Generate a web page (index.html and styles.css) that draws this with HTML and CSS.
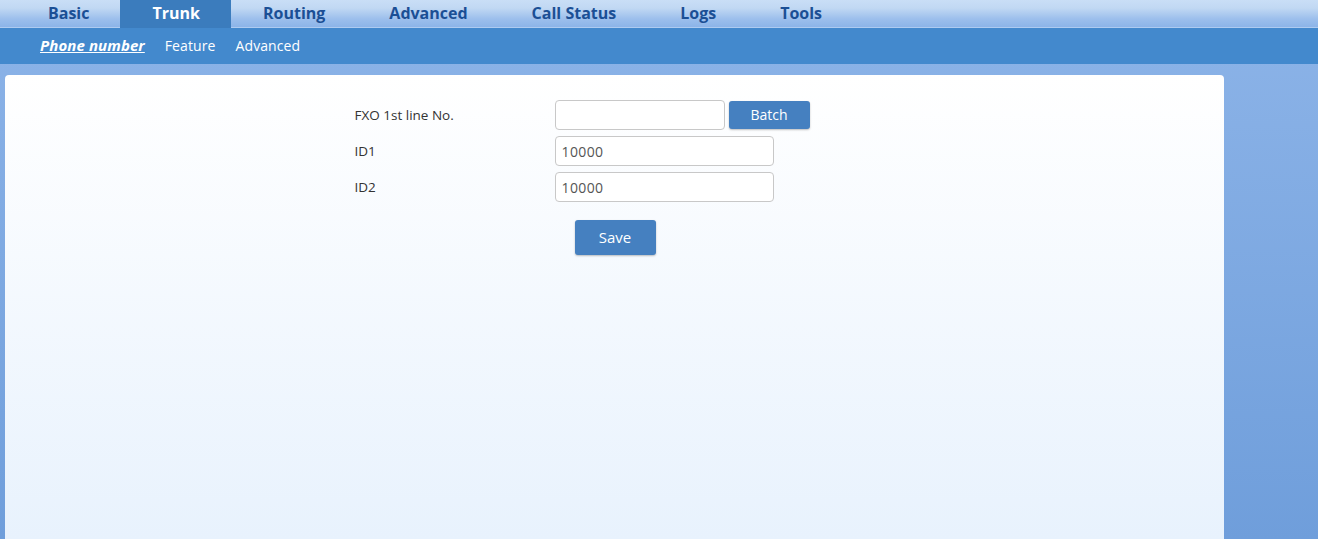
FILE: index.html
```html
<!DOCTYPE html>
<html>

    <head>
        <link rel="stylesheet" href="styles.css">
    </head>

    <body>
        <div class="topnav">
            <a class="tab">Basic</a>
            <a class="tab active">Trunk</a>
            <a class="tab">Routing</a>
            <a class="tab">Advanced</a>
            <a class="tab">Call Status</a>
            <a class="tab">Logs</a>
            <a class="tab">Tools</a>
        </div>
        <div class="subnav">
            <a class="sub current">Phone number</a>
            <a class="sub">Feature</a>
            <a class="sub">Advanced</a>
        </div>

        <div class="main">
            <div class="card">
                <div class="form">
                    <label>FXO 1st line No.</label>
                    <div class="field">
                        <input class="short" value="">
                        <button class="btn batch">Batch</button>
                    </div>
                    <label>ID1</label>
                    <div class="field">
                        <input value="10000">
                    </div>
                    <label>ID2</label>
                    <div class="field">
                        <input value="10000">
                    </div>
                </div>
                <div class="actions">
                    <button class="btn save">Save</button>
                </div>
            </div>
        </div>
    </body>

</html>
```

FILE: styles.css
```css
html, body {
    height: 100%;
}
body {
    margin: 0;
    font-family: "Open Sans", "Liberation Sans", sans-serif;
    background: linear-gradient(#8db4e8, #6f9edb);
    display: flex;
    flex-direction: column;
    overflow: hidden;
}
.topnav {
    display: flex;
    height: 27px;
    padding-left: 16px;
    background: linear-gradient(#c9def6 0%, #c1d8f3 30%, #9cbfec 70%, #8cb4e8 100%);
    border-bottom: 1px solid #aecbf0;
}
.tab {
    padding: 0 32px;
    font-size: 16px;
    font-weight: bold;
    line-height: 27px;
    color: #1b4f95;
}
.tab:first-child {
    padding-right: 31px;
}
.tab.active {
    padding: 0 31px 0 32px;
    background: #3b7cbd;
    color: #fff;
    height: 28px;
}
.subnav {
    display: flex;
    gap: 20px;
    height: 34px;
    align-items: center;
    padding: 0 0 2px 40px;
    background: #4389cd;
}
.sub {
    color: #fff;
    font-size: 14px;
    letter-spacing: 0.1px;
}
.sub.current {
    font-size: 15px;
    font-weight: bold;
    font-style: italic;
    text-decoration: underline;
}
.main {
    flex: 1;
    padding: 11px 94px 0 5px;
}
.card {
    height: 100%;
    box-sizing: border-box;
    padding-top: 25px;
    border-radius: 4px 4px 0 0;
    background: linear-gradient(#ffffff, #e8f2fd);
}
.form {
    width: 520px;
    margin: 0 auto;
    display: grid;
    grid-template-columns: 200px 1fr;
    row-gap: 6px;
    align-items: center;
}
.form label {
    font-size: 13.5px;
    color: #333;
}
.field {
    display: flex;
    align-items: center;
    gap: 4px;
}
input {
    width: 219px;
    height: 30px;
    box-sizing: border-box;
    border: 1px solid #c8c8c8;
    border-radius: 4px;
    padding: 0 6px;
    font-family: inherit;
    font-size: 14px;
    letter-spacing: 0.4px;
    color: #555;
    background: #fff;
}
input.short {
    width: 170px;
}
.btn {
    border: 0;
    border-radius: 3px;
    background: #4580c0;
    color: #fff;
    font-family: inherit;
    width: 81px;
    padding: 0 0 2px;
    box-shadow: 0 1px 2px rgba(0, 0, 0, 0.25);
}
.batch {
    height: 28px;
    font-size: 14px;
}
.actions {
    display: flex;
    justify-content: center;
    padding-top: 18px;
    padding-left: 1px;
}
.save {
    height: 35px;
    font-size: 15px;
}
```
